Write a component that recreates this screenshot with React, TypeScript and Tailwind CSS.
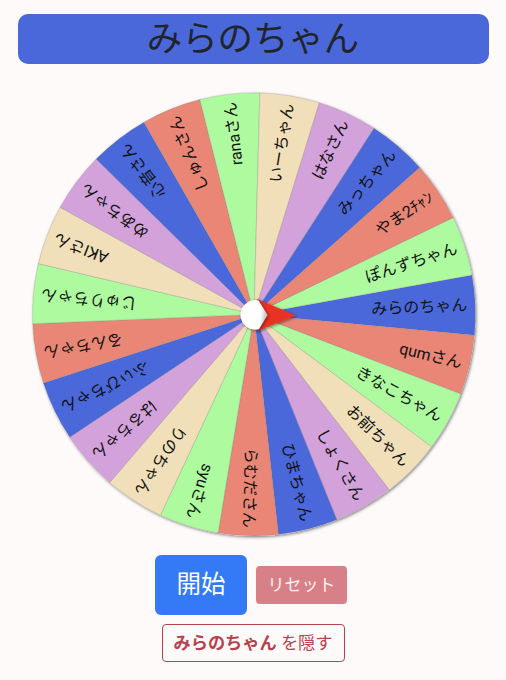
import React from 'react';

const CX = 254;
const CY = 314.4;
const RADIUS = 221.5;

const BLUE = '#4a68d9';
const SALMON = '#e98676';
const GREEN = '#aefb9f';
const WHEAT = '#f0dfb9';
const PLUM = '#d3a2db';

// clockwise, starting with the slice under the pointer
const slices = [
  { name: 'みらのちゃん', color: BLUE },
  { name: 'qumさん', color: SALMON },
  { name: 'きなこちゃん', color: GREEN },
  { name: 'お前ちゃん', color: WHEAT },
  { name: 'しょくさん', color: PLUM },
  { name: 'ひまちゃん', color: BLUE },
  { name: 'らむださん', color: SALMON },
  { name: 'syuさん', color: GREEN },
  { name: 'りのちゃん', color: WHEAT },
  { name: 'はるちゃん', color: PLUM },
  { name: 'ふぃびちゃん', color: BLUE },
  { name: 'るんちゃん', color: SALMON },
  { name: 'じゅりちゃん', color: GREEN },
  { name: 'AKIさん', color: WHEAT },
  { name: 'めあちゃん', color: PLUM },
  { name: '心音さん', color: BLUE },
  { name: 'しゅんさん', color: SALMON },
  { name: 'ranaさん', color: GREEN },
  { name: 'いーちゃん', color: WHEAT },
  { name: 'はなさん', color: PLUM },
  { name: 'みっちゃん', color: BLUE },
  { name: 'やま2ﾁｬﾝ', color: SALMON },
  { name: 'ぽんずちゃん', color: GREEN },
];

const STEP = 360 / slices.length;
const START = -2.4;

const point = (deg: number) => {
  const rad = (deg * Math.PI) / 180;
  return `${CX + RADIUS * Math.cos(rad)} ${CY + RADIUS * Math.sin(rad)}`;
};

function Wheel() {
  return (
    <svg viewBox="24 84 460 462" className="h-[462px] w-[460px]">
      <defs>
        <filter id="wheelShadow" x="-5%" y="-5%" width="110%" height="110%">
          <feDropShadow dx="1" dy="1.2" stdDeviation="1.5" floodColor="#000" floodOpacity="0.5" />
        </filter>
        <filter id="pinShadow" x="-40%" y="-40%" width="180%" height="180%">
          <feDropShadow dx="1" dy="1" stdDeviation="1.5" floodColor="#000" floodOpacity="0.5" />
        </filter>
        <linearGradient id="capShade" x1="0" y1="0" x2="1" y2="0.15">
          <stop offset="0.8" stopColor="#fff" />
          <stop offset="1" stopColor="#c9c4c4" />
        </linearGradient>
      </defs>

      <circle cx={CX} cy={CY} r={RADIUS} fill="#fff" filter="url(#wheelShadow)" />
      {slices.map((slice, i) => {
        const mid = START + i * STEP;
        return (
          <path
            key={slice.name}
            d={`M${CX} ${CY} L${point(mid - STEP / 2)} A${RADIUS} ${RADIUS} 0 0 1 ${point(mid + STEP / 2)} Z`}
            fill={slice.color}
            stroke="#777"
            strokeOpacity="0.45"
            strokeWidth="0.6"
          />
        );
      })}
      {slices.map((slice, i) => (
        <text
          key={slice.name}
          x={CX + 213.5}
          y={CY + 5}
          textAnchor="end"
          fontSize="16"
          fill="#111"
          transform={`rotate(${START + i * STEP} ${CX} ${CY})`}
        >
          {slice.name}
        </text>
      ))}

      {/* Pointer */}
      <path d="M257 299 L296 315.5 L257 331 Z" fill="#ea3323" filter="url(#pinShadow)" />
      <path
        d="M258.5 300.5 L267.5 315 L259 329 A14.7 14.7 0 1 1 258.5 300.5 Z"
        fill="url(#capShade)"
        filter="url(#pinShadow)"
      />
    </svg>
  );
}

export default function App() {
  return (
    <div className="flex h-[680px] w-[506px] flex-col items-center overflow-hidden bg-[#fefaf9] pt-[14px] font-['Roboto','Noto_Sans_CJK_JP',sans-serif]">
      <h1 className="flex h-[50px] w-[471px] items-center justify-center rounded-[10px] bg-[#4a68d9] pt-[2px] text-[35.4px] leading-none text-[#212529]">
        みらのちゃん
      </h1>

      <div className="mt-5 pl-[2px]">
        <Wheel />
      </div>

      <div className="mt-[9px] flex items-center gap-[9px] pr-[4px]">
        <button className="h-[60px] w-[92px] rounded-md bg-[#347af6] text-[24.5px] leading-none text-white">
          開始
        </button>
        <button className="h-[38px] w-[91px] rounded bg-[#d88087] text-[17px] leading-none text-[#fdf3f3]">
          リセット
        </button>
      </div>
      <button className="mt-[9px] h-[38px] w-[183px] rounded border border-[#b9414d] pt-px text-[17.2px] leading-none text-[#b9414d]">
        <b>みらのちゃん</b> を隠す
      </button>
    </div>
  );
}
